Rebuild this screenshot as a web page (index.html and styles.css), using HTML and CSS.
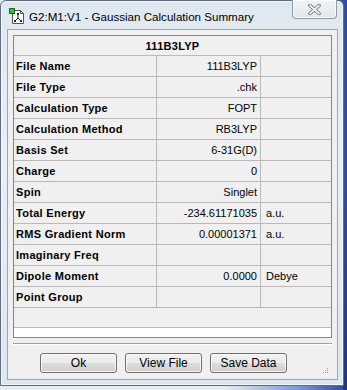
FILE: index.html
```html
<!DOCTYPE html>
<html lang="en">
<head>
    <meta charset="UTF-8">
    <title>G2:M1:V1 - Gaussian Calculation Summary</title>
    <link rel="stylesheet" href="styles.css">
</head>
<body>
    <div class="window">
        <div class="titlebar">
            <svg class="app-icon" width="16" height="16" viewBox="0 0 16 16">
                <path d="M3.5 2.5h8l3 3v10h-11z" fill="#fff" stroke="#555"/>
                <path d="M11.5 2.5v3h3" fill="none" stroke="#555"/>
                <path d="M9 6v4M9 10l-3 3M9 10l3 3" stroke="#222" stroke-width="1"/>
                <rect x="8" y="5" width="2" height="2" fill="#222"/>
                <rect x="5" y="12" width="2" height="2" fill="#222"/>
                <rect x="11" y="12" width="2" height="2" fill="#222"/>
                <rect x="0.5" y="0.5" width="5" height="5" fill="#2fc02f" stroke="#1a6e1a"/>
            </svg>
            <span class="title">G2:M1:V1 - Gaussian Calculation Summary</span>
            <div class="close-btn">
                <svg width="13" height="11" viewBox="0 0 13 11">
                    <path d="M2 1.5l9 8M11 1.5l-9 8" stroke="#6f747a" stroke-width="3.6" stroke-linecap="round"/>
                    <path d="M2 1.5l9 8M11 1.5l-9 8" stroke="#f4f6f8" stroke-width="1.7" stroke-linecap="round"/>
                </svg>
            </div>
        </div>
        <div class="client">
            <div class="list-box">
                <table class="summary">
                    <colgroup>
                        <col class="col-label">
                        <col class="col-value">
                        <col class="col-unit">
                    </colgroup>
                    <tr class="head"><td colspan="3">111B3LYP</td></tr>
                    <tr><td class="label">File Name</td><td class="value">111B3LYP</td><td class="unit"></td></tr>
                    <tr><td class="label">File Type</td><td class="value">.chk</td><td class="unit"></td></tr>
                    <tr><td class="label">Calculation Type</td><td class="value">FOPT</td><td class="unit"></td></tr>
                    <tr><td class="label">Calculation Method</td><td class="value">RB3LYP</td><td class="unit"></td></tr>
                    <tr><td class="label">Basis Set</td><td class="value">6-31G(D)</td><td class="unit"></td></tr>
                    <tr><td class="label">Charge</td><td class="value">0</td><td class="unit"></td></tr>
                    <tr><td class="label">Spin</td><td class="value">Singlet</td><td class="unit"></td></tr>
                    <tr><td class="label">Total Energy</td><td class="value">-234.61171035</td><td class="unit">a.u.</td></tr>
                    <tr><td class="label">RMS Gradient Norm</td><td class="value">0.00001371</td><td class="unit">a.u.</td></tr>
                    <tr><td class="label">Imaginary Freq</td><td class="value"></td><td class="unit"></td></tr>
                    <tr><td class="label">Dipole Moment</td><td class="value">0.0000</td><td class="unit">Debye</td></tr>
                    <tr><td class="label">Point Group</td><td class="value"></td><td class="unit"></td></tr>
                    <tr class="blank"><td colspan="3"></td></tr>
                </table>
            </div>
            <div class="separator"></div>
            <div class="button-row">
                <button class="btn">Ok</button>
                <button class="btn">View File</button>
                <button class="btn">Save Data</button>
                <svg class="grip" width="7" height="7" viewBox="0 0 7 7">
                    <rect x="5" y="1" width="1" height="1" fill="#a0a0a0"/>
                    <rect x="3" y="3" width="1" height="1" fill="#a0a0a0"/>
                    <rect x="5" y="3" width="1" height="1" fill="#a0a0a0"/>
                    <rect x="1" y="5" width="1" height="1" fill="#a0a0a0"/>
                    <rect x="3" y="5" width="1" height="1" fill="#a0a0a0"/>
                    <rect x="5" y="5" width="1" height="1" fill="#a0a0a0"/>
                </svg>
            </div>
        </div>
    </div>
</body>
</html>
```

FILE: styles.css
```css
/* desktop behind the dialog */
body {
    margin: 0;
    width: 347px;
    height: 390px;
    overflow: hidden;
    background:
        linear-gradient(to bottom, rgba(0,0,0,0) 50%, #34488f 56%, #22367a 100%) right top / 4px 100% no-repeat,
        linear-gradient(to right, #e4ebf1 65%, #7f9ed6 85%, #2b4a9a 100%);
}

/* aero frame */
.window {
    box-sizing: border-box;
    width: 344px;
    height: 386px;
    padding: 0 5px 5px 6px;
    border: 1px solid #5f6f80;
    border-radius: 6px 6px 0 0;
    background: linear-gradient(to bottom, #dfe8f0 0%, #e9f0f5 40%, #dde7ef 100%);
    box-shadow: inset 0 0 0 1px rgba(255,255,255,0.6);
    font-family: "Liberation Sans", Arial, sans-serif;
}

.titlebar {
    display: flex;
    align-items: center;
    height: 28px;
}
.app-icon {
    margin-left: 2px;
    margin-top: 2px;
    flex: none;
}
.title {
    margin-left: 4px;
    margin-top: 2px;
    font-size: 11.6px;
    color: #000;
    white-space: nowrap;
}
.close-btn {
    align-self: flex-start;
    margin-left: auto;
    margin-right: 1px;
    margin-top: -1px;
    width: 45px;
    height: 19px;
    box-sizing: border-box;
    border: 1px solid #8f9aa5;
    border-top: none;
    border-radius: 0 0 4px 4px;
    background: linear-gradient(to bottom, #eef3f7, #e1e8ee);
    box-shadow: inset 0 0 0 1px rgba(255,255,255,0.7);
    display: flex;
    align-items: center;
    justify-content: center;
}

/* dialog body */
.client {
    box-sizing: border-box;
    height: 351px;
    padding: 5px 5px 0 5px;
    border: 1px solid #99a6b3;
    background: #f0f0f0;
}

.list-box {
    box-sizing: border-box;
    height: 303px;
    border: 1px solid #828790;
    background: #fff;
}

.summary {
    width: 317px;
    table-layout: fixed;
    border-collapse: separate;
    border-spacing: 0;
    font-size: 11px;
    color: #000;
}
.col-label { width: 143px; }
.col-value { width: 104px; }
.col-unit { width: 70px; }

.summary td {
    box-sizing: border-box;
    height: 21px;
    padding: 0;
    background: #f0f0f0;
    border-bottom: 1px solid #b9b9b9;
    border-right: 1px solid #b9b9b9;
    white-space: nowrap;
    overflow: hidden;
}
.summary td:last-child {
    border-right: none;
}
.summary .head td {
    height: 20px;
    text-align: center;
    font-weight: bold;
    letter-spacing: 0.3px;
}
.summary .blank td {
    height: 20px;
}
.label {
    padding-left: 2px !important;
    font-weight: bold;
    letter-spacing: 0.3px;
}
.value {
    text-align: right;
    padding-right: 3px !important;
}
.unit {
    padding-left: 5px !important;
}

.separator {
    margin-top: 5px;
    border-top: 1px solid #a0a0a0;
    border-bottom: 1px solid #fff;
    height: 0;
}

.button-row {
    display: flex;
    align-items: flex-end;
    gap: 8px;
    margin-top: 8px;
    padding-left: 27px;
    height: 20px;
}
.btn {
    box-sizing: border-box;
    width: 77px;
    height: 20px;
    padding: 0;
    border: 1px solid #707070;
    border-radius: 3px;
    background: linear-gradient(to bottom, #f2f2f2 0%, #ebebeb 50%, #dddddd 51%, #cfcfcf 100%);
    box-shadow: inset 0 0 0 1px rgba(255,255,255,0.75);
    font-family: "Liberation Sans", Arial, sans-serif;
    font-size: 12px;
    color: #000;
}
.grip {
    margin-left: auto;
    margin-right: 3px;
    margin-bottom: -1px;
}
```
